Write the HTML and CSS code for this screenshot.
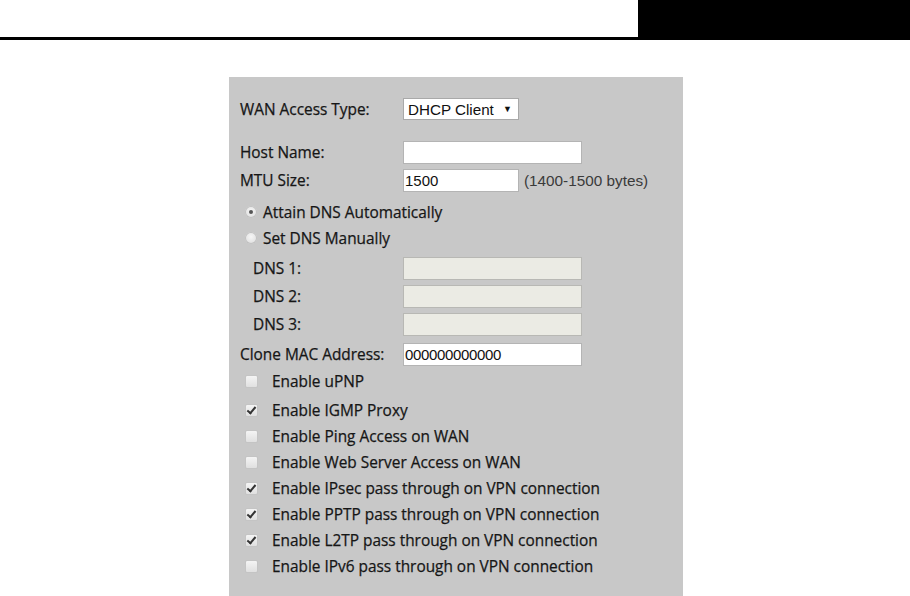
FILE: index.html
```html
<!DOCTYPE html>
<html>
<head>
<meta charset="utf-8">
<link rel="stylesheet" href="styles.css">
</head>
<body>
<header class="topbar">
  <div class="topbar-fill"></div>
  <div class="topbar-tab"></div>
</header>
<main class="stage">
  <form class="panel">
    <div class="row row-wan">
      <span class="label">WAN Access Type:</span>
      <div class="select"><span>DHCP Client</span><span class="caret">&#9660;</span></div>
    </div>
    <div class="row row-field row-host">
      <span class="label">Host Name:</span>
      <span class="field wide"></span>
    </div>
    <div class="row row-field row-tight">
      <span class="label">MTU Size:</span>
      <span class="field narrow">1500</span>
      <span class="hint">(1400-1500 bytes)</span>
    </div>
    <div class="row row-radio row-radio-first">
      <span class="radio checked"></span><span class="opt">Attain DNS Automatically</span>
    </div>
    <div class="row row-radio">
      <span class="radio"></span><span class="opt">Set DNS Manually</span>
    </div>
    <div class="row row-field row-dns1">
      <span class="label sub">DNS 1:</span>
      <span class="field wide disabled"></span>
    </div>
    <div class="row row-field row-tight">
      <span class="label sub">DNS 2:</span>
      <span class="field wide disabled"></span>
    </div>
    <div class="row row-field row-tight">
      <span class="label sub">DNS 3:</span>
      <span class="field wide disabled"></span>
    </div>
    <div class="row row-field row-mac">
      <span class="label">Clone MAC Address:</span>
      <span class="field wide mac">000000000000</span>
    </div>
    <div class="checks">
      <div class="row row-check"><span class="box"></span><span class="opt">Enable uPNP</span></div>
      <div class="row row-check row-igmp"><span class="box on"></span><span class="opt">Enable IGMP Proxy</span></div>
      <div class="row row-check"><span class="box"></span><span class="opt">Enable Ping Access on WAN</span></div>
      <div class="row row-check"><span class="box"></span><span class="opt">Enable Web Server Access on WAN</span></div>
      <div class="row row-check"><span class="box on"></span><span class="opt">Enable IPsec pass through on VPN connection</span></div>
      <div class="row row-check"><span class="box on"></span><span class="opt">Enable PPTP pass through on VPN connection</span></div>
      <div class="row row-check"><span class="box on"></span><span class="opt">Enable L2TP pass through on VPN connection</span></div>
      <div class="row row-check"><span class="box"></span><span class="opt">Enable IPv6 pass through on VPN connection</span></div>
    </div>
  </form>
</main>
</body>
</html>
```

FILE: styles.css
```css
* { box-sizing: border-box; }
html, body { margin: 0; padding: 0; background: #fff; }
body { width: 910px; height: 596px; overflow: hidden; font-family: "Open Sans", "Liberation Sans", sans-serif; }

.topbar { display: flex; height: 40px; border-bottom: 3px solid #000; }
.topbar-fill { flex: 1; }
.topbar-tab { width: 272px; background: #000; }

.stage { display: flex; padding-left: 229px; padding-top: 37px; }
.panel {
  width: 454px;
  height: 519px;
  overflow: hidden;
  background: #c8c8c8;
  padding: 21px 0 0 11px;
  display: flex;
  flex-direction: column;
  color: #161616;
  font-size: 15.4px;
  font-weight: 500;
}
.label, .opt { -webkit-text-stroke: 0.25px #161616; }

.row { display: flex; align-items: center; flex: none; }
.label { width: 163px; flex: none; white-space: nowrap; }
.label.sub { padding-left: 13px; }

.row-wan { height: 22px; }
.row-field { height: 23px; }
.row-host { margin-top: 21px; }
.row-tight { margin-top: 5px; }
.row-dns1 { margin-top: 8px; }
.row-mac { margin-top: 7px; }

.select {
  display: flex; align-items: center; justify-content: space-between;
  width: 116px; height: 22px;
  background: #fff; border: 1px solid #a9a9a9;
  padding: 0 6px 0 4px;
  font-family: "Liberation Sans", Arial, sans-serif; font-size: 15.2px; font-weight: 400; color: #111;
}
.caret { font-size: 9px; color: #111; }

.field {
  display: flex; align-items: center;
  height: 23px; background: #fff; border: 1px solid #b4b4b4;
  padding: 0 1px;
  font-family: "Liberation Sans", Arial, sans-serif; font-size: 15px; font-weight: 400; color: #111;
}
.field.wide { width: 179px; }
.field.narrow { width: 116px; }
.field.disabled { background: #ebebe4; border-color: #b8b8b4; }
.field.mac { letter-spacing: -0.35px; }
.hint { margin-left: 5px; font-family: "Liberation Sans", Arial, sans-serif; font-size: 15.3px; font-weight: 400; color: #3a3a3a; }

.row-radio { height: 22px; padding-left: 5px; }
.row-radio-first { margin-top: 9px; }
.row-radio + .row-radio { margin-top: 4px; }
.radio {
  width: 12px; height: 12px; border-radius: 50%; flex: none;
  background: radial-gradient(circle at 50% 40%, #f6f6f6 0%, #e4e4e4 60%, #d2d2d2 100%);
  box-shadow: inset 0 0 0 1px #c0c0c0;
  margin-right: 6px; position: relative;
}
.radio.checked::after {
  content: ""; position: absolute; left: 4px; top: 4px; width: 4px; height: 4px;
  border-radius: 50%; background: #555;
}

.checks { display: flex; flex-direction: column; margin-top: 2px; }
.row-check { height: 26px; padding-left: 5px; }
.row-igmp { margin-top: 3px; }
.box {
  width: 13px; height: 13px; flex: none; border-radius: 2px;
  background: linear-gradient(#f4f4f4, #e0e0e0);
  border: 1px solid #c4c4c4;
  margin-right: 14px; position: relative;
}
.box.on::after {
  content: ""; position: absolute; left: 3px; top: 0px; width: 3px; height: 7px;
  border-right: 2px solid #333; border-bottom: 2px solid #333;
  transform: rotate(40deg);
}
.opt { white-space: nowrap; }
```
